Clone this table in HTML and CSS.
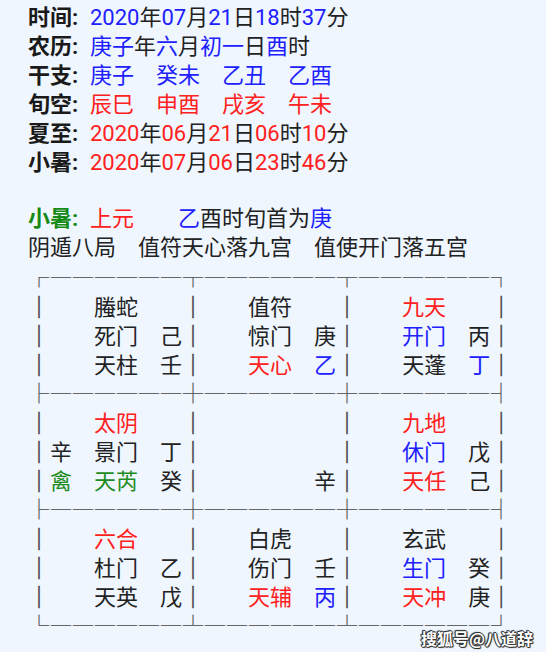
FILE: index.html
```html
<!DOCTYPE html>
<html lang="zh-CN">
<head>
<meta charset="utf-8">
<title>奇门遁甲排盘</title>
<link rel="stylesheet" href="styles.css">
</head>
<body>
<main class="page">
  <section class="head">
    <div class="line"><span class="label">时间:</span><span class="b">2020</span>年<span class="b">07</span>月<span class="b">21</span>日<span class="b">18</span>时<span class="b">37</span>分</div>
    <div class="line"><span class="label">农历:</span><span class="b">庚子</span>年<span class="b">六</span>月<span class="b">初一</span>日<span class="b">酉</span>时</div>
    <div class="line"><span class="label">干支:</span><span class="b">庚子　癸未　乙丑　乙酉</span></div>
    <div class="line"><span class="label">旬空:</span><span class="r">辰巳　申酉　戌亥　午未</span></div>
    <div class="line"><span class="label">夏至:</span><span class="r">2020</span>年<span class="r">06</span>月<span class="r">21</span>日<span class="r">06</span>时<span class="r">10</span>分</div>
    <div class="line"><span class="label">小暑:</span><span class="r">2020</span>年<span class="r">07</span>月<span class="r">06</span>日<span class="r">23</span>时<span class="r">46</span>分</div>
  </section>
  <section class="info">
    <div class="line"><span class="label g">小暑:</span><span class="r">上元</span>　　<span class="b">乙</span>酉时旬首为<span class="b">庚</span></div>
    <div class="line">阴遁八局　值符天心落九宫　值使开门落五宫</div>
  </section>
  <section class="grid">
<div class="row"><span class="hz">┌──────┬──────┬──────┐</span></div>
<div class="row"><span class="bx">│</span>　　螣蛇　　<span class="bx">│</span>　　值符　　<span class="bx">│</span>　　<span class="r">九天</span>　　<span class="bx">│</span></div>
<div class="row"><span class="bx">│</span>　　死门　己<span class="bx">│</span>　　惊门　庚<span class="bx">│</span>　　<span class="b">开门</span>　丙<span class="bx">│</span></div>
<div class="row"><span class="bx">│</span>　　天柱　壬<span class="bx">│</span>　　<span class="r">天心</span>　<span class="b">乙</span><span class="bx">│</span>　　天蓬　<span class="b">丁</span><span class="bx">│</span></div>
<div class="row"><span class="hz">├──────┼──────┼──────┤</span></div>
<div class="row"><span class="bx">│</span>　　<span class="r">太阴</span>　　<span class="bx">│</span>　　　　　　<span class="bx">│</span>　　<span class="r">九地</span>　　<span class="bx">│</span></div>
<div class="row"><span class="bx">│</span>辛　景门　丁<span class="bx">│</span>　　　　　　<span class="bx">│</span>　　<span class="b">休门</span>　戊<span class="bx">│</span></div>
<div class="row"><span class="bx">│</span><span class="g">禽</span>　<span class="g">天芮</span>　癸<span class="bx">│</span>　　　　　辛<span class="bx">│</span>　　<span class="r">天任</span>　己<span class="bx">│</span></div>
<div class="row"><span class="hz">├──────┼──────┼──────┤</span></div>
<div class="row"><span class="bx">│</span>　　<span class="r">六合</span>　　<span class="bx">│</span>　　白虎　　<span class="bx">│</span>　　玄武　　<span class="bx">│</span></div>
<div class="row"><span class="bx">│</span>　　杜门　乙<span class="bx">│</span>　　伤门　壬<span class="bx">│</span>　　<span class="b">生门</span>　癸<span class="bx">│</span></div>
<div class="row"><span class="bx">│</span>　　天英　戊<span class="bx">│</span>　　<span class="r">天辅</span>　<span class="b">丙</span><span class="bx">│</span>　　<span class="r">天冲</span>　庚<span class="bx">│</span></div>
<div class="row last"><span class="hz">└──────┴──────┴──────┘</span></div>
  </section>
  <div class="watermark">搜狐号@八道辞</div>
</main>
</body>
</html>
```
FILE: styles.css
```css
html, body {
  margin: 0;
  padding: 0;
  background: #eff6fe;
}
body {
  width: 546px;
  height: 652px;
  overflow: hidden;
}
.page {
  position: relative;
  height: 652px;
  padding: 3px 0 0 28px;
  box-sizing: border-box;
  font-family: "Roboto", "Noto Sans CJK SC", sans-serif;
  font-size: 22px;
  line-height: 29px;
  color: #222222;
}
.line, .row {
  white-space: pre;
  height: 29px;
}
.label {
  display: inline-block;
  width: 62px;
  font-weight: 700;
  color: #1a1a1a;
}
.info {
  margin-top: 27px;
}
.bx {
  font-family: "Noto Sans CJK SC", sans-serif;
  color: #4a4a4a;
  -webkit-text-stroke: 0.6px #4a4a4a;
}
.hz {
  font-family: "Noto Sans CJK SC", sans-serif;
  font-size: 20px;
  letter-spacing: 2px;
  margin-left: 1px;
  vertical-align: 3px;
  color: #505050;
  -webkit-text-stroke: 0.2px #505050;
}
.b { color: #2020ff; }
.r { color: #ff2020; }
.g { color: #1e8c1e; }
.label.g { color: #168a16; }
.watermark {
  position: absolute;
  right: 13px;
  bottom: 4px;
  font-family: "Noto Sans CJK SC", sans-serif;
  font-size: 16px;
  line-height: 20px;
  font-weight: 700;
  color: #ffffff;
  text-shadow: 1px 0 0 #333, -1px 0 0 #333, 0 1px 0 #333, 0 -1px 0 #333, 1px 1px 1px #333, -1px -1px 1px #333;
}
```
